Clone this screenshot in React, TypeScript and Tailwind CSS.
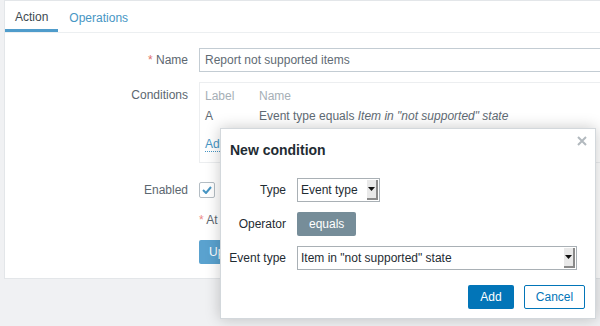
import React from "react";

const font = "font-['Liberation_Sans',Arial,sans-serif]";

function SelectBox({ value, width }: { value: string; width: string }) {
  return (
    <div
      className={`flex h-[24px] ${width} items-stretch border border-[#a9b0b5] bg-white text-[12px] text-[#1f2c33]`}
    >
      <div className="flex flex-1 items-center overflow-hidden whitespace-nowrap pl-[3px]">
        {value}
      </div>
      <div className="my-[1px] mr-[1px] flex w-[11px] items-center justify-center border-r-2 border-b-2 border-r-[#8a8a8a] border-b-[#8a8a8a] bg-[#e9e9e9]">
        <svg width="7" height="4" viewBox="0 0 7 4">
          <path d="M0 0h7L3.5 4z" fill="#111" />
        </svg>
      </div>
    </div>
  );
}

export default function App() {
  return (
    <div
      className={`relative h-[326px] w-[600px] overflow-hidden bg-[#f0f1f3] ${font} text-[12px]`}
    >
      {/* page card */}
      <div className="ml-[4px] w-[620px] border border-[#e3e6e9] bg-white">
        <div className="flex h-[32px] border-b border-[#eceff1]">
          <div className="flex h-[31px] items-center border-b-[3px] border-[#4f9ccb] px-[10px] pt-[3px] text-[#3d4a52]">
            Action
          </div>
          <div className="flex h-[31px] items-center px-[11px] pt-[3px] text-[#4796c4]">
            Operations
          </div>
        </div>

        <div className="flex flex-col pt-[15px] pb-[14px]">
          <div className="flex h-[24px] items-center">
            <div className="w-[183px] pr-[0px] text-right text-[#5c6770]">
              <span className="text-[#e0706b]">*</span> Name
            </div>
            <div className="ml-[11px] flex h-[24px] flex-1 items-center border border-[#c3ccd3] pl-[5px] text-[#5f6b74]">
              Report not supported items
            </div>
          </div>

          <div className="mt-[10px] flex">
            <div className="w-[183px] pt-[4px] text-right text-[#5c6770]">
              Conditions
            </div>
            <div className="ml-[11px] h-[81px] flex-1 border border-[#eceef0] pl-[5px] pt-[3px]">
              <div className="flex h-[20px] items-center text-[#a6afb6]">
                <div className="w-[54px]">Label</div>
                <div>Name</div>
              </div>
              <div className="flex h-[20px] items-center whitespace-nowrap text-[#5f6b74]">
                <div className="w-[54px]">A</div>
                <div>
                  Event type equals <i>Item in "not supported" state</i>
                </div>
              </div>
              <div className="mt-[11px] inline-block border-b border-dotted border-[#4796c4] leading-[14px] text-[#4796c4]">
                Add
              </div>
            </div>
          </div>

          <div className="mt-[19px] flex h-[16px] items-center">
            <div className="w-[183px] text-right text-[#5c6770]">Enabled</div>
            <div className="ml-[11px] flex h-[16px] w-[16px] items-center justify-center rounded-[2px] border border-[#b4bdc4]">
              <svg width="10" height="8" viewBox="0 0 10 8">
                <path
                  d="M1 4l3 3 5-6"
                  stroke="#4796c4"
                  strokeWidth="2"
                  fill="none"
                />
              </svg>
            </div>
          </div>

          <div className="mt-[14px] flex h-[16px] items-center">
            <div className="w-[183px]" />
            <div className="ml-[11px] text-[#5c6770]">
              <span className="text-[#ec8a86]">*</span> At least one operation
              must exist.
            </div>
          </div>

          <div className="mt-[12px] flex">
            <div className="w-[183px]" />
            <div className="ml-[11px] flex h-[24px] items-center rounded-[2px] bg-[#5aa2cf] px-[10px] text-white">
              Update
            </div>
          </div>
        </div>
      </div>

      {/* modal */}
      <div className="absolute left-[220px] top-[128px] h-[191px] w-[376px] border border-[#d3d8dc] bg-white shadow-[0_0_14px_rgba(0,0,0,0.22)]">
        <svg
          className="absolute right-[8px] top-[7px]"
          width="10"
          height="10"
          viewBox="0 0 10 10"
        >
          <path
            d="M1 1l8 8M9 1l-8 8"
            stroke="#b2b9be"
            strokeWidth="2"
          />
        </svg>
        <div className="pl-[9px] pt-[12px] text-[14px] font-bold leading-[18px] text-[#1f2c33]">
          New condition
        </div>

        <div className="mt-[19px] flex flex-col gap-[10px] text-[#1f2c33]">
          <div className="flex items-center">
            <div className="w-[65px] text-right">Type</div>
            <div className="ml-[11px]">
              <SelectBox value="Event type" width="w-[83px]" />
            </div>
          </div>
          <div className="flex items-center">
            <div className="w-[65px] text-right">Operator</div>
            <div className="ml-[11px] flex h-[24px] items-center rounded-[2px] bg-[#768d99] px-[12px] text-white">
              equals
            </div>
          </div>
          <div className="flex items-center">
            <div className="w-[65px] text-right">Event type</div>
            <div className="ml-[11px]">
              <SelectBox
                value={'Item in "not supported" state'}
                width="w-[280px]"
              />
            </div>
          </div>
        </div>

        <div className="mt-[15px] flex justify-end gap-[10px] pr-[10px]">
          <div className="flex h-[24px] w-[46px] items-center justify-center rounded-[2px] bg-[#0275b8] text-white">
            Add
          </div>
          <div className="flex h-[24px] w-[61px] items-center justify-center rounded-[2px] border border-[#0275b8] bg-white text-[#0275b8]">
            Cancel
          </div>
        </div>
      </div>
    </div>
  );
}
